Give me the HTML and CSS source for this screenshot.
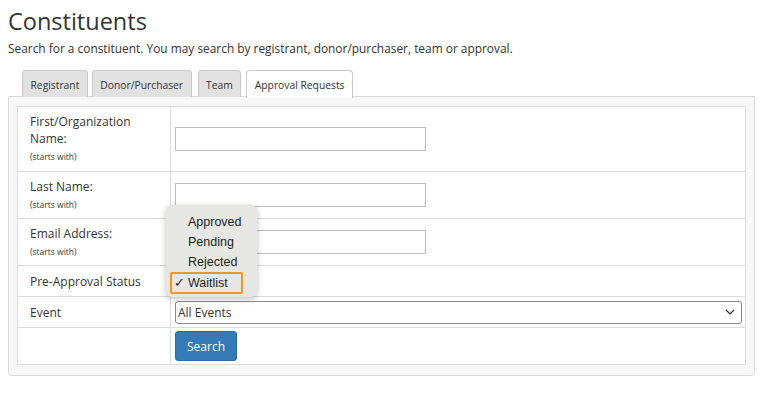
FILE: index.html
```html
<!DOCTYPE html>
<html lang="en">
<head>
  <meta charset="UTF-8">
  <meta name="viewport" content="width=device-width, initial-scale=1.0">
  <title>Constituents</title>
  <link rel="stylesheet" href="styles.css">
</head>
<body>
  <h1>Constituents</h1>
  <p class="intro">Search for a constituent. You may search by registrant, donor/purchaser, team or approval.</p>

  <div class="tabs">
    <div class="tab">Registrant</div>
    <div class="tab">Donor/Purchaser</div>
    <div class="tab">Team</div>
    <div class="tab active">Approval Requests</div>
  </div>

  <div class="panel">
    <table class="search-table">
      <tr class="row-tall">
        <td class="label">First/Organization Name:<br><small>(starts with)</small></td>
        <td><input type="text" class="text-input"></td>
      </tr>
      <tr class="row-mid">
        <td class="label">Last Name:<br><small>(starts with)</small></td>
        <td><input type="text" class="text-input"></td>
      </tr>
      <tr class="row-mid">
        <td class="label">Email Address:<br><small>(starts with)</small></td>
        <td><input type="text" class="text-input"></td>
      </tr>
      <tr class="row-short">
        <td class="label">Pre-Approval Status</td>
        <td class="status-cell">
          <div class="menu">
            <div class="menu-item">Approved</div>
            <div class="menu-item">Pending</div>
            <div class="menu-item">Rejected</div>
            <div class="menu-item checked"><span class="check">✓</span>Waitlist</div>
          </div>
        </td>
      </tr>
      <tr class="row-short">
        <td class="label">Event</td>
        <td>
          <div class="select">
            <span>All Events</span>
            <svg width="10" height="6" viewBox="0 0 10 6"><path d="M1 1l4 4 4-4" fill="none" stroke="#333" stroke-width="1.2"/></svg>
          </div>
        </td>
      </tr>
      <tr class="row-button">
        <td></td>
        <td><button class="search-btn">Search</button></td>
      </tr>
    </table>
  </div>
</body>
</html>
```
FILE: styles.css
```css
body {
  margin: 8px;
  font-family: "Open Sans", sans-serif;
  color: #333;
  background: #fff;
}
h1 {
  margin: 0 0 5px 0;
  font-size: 23.5px;
  font-weight: 400;
  line-height: 27px;
}
.intro {
  margin: 0;
  font-size: 11.9px;
  line-height: 16px;
}
.tabs {
  display: flex;
  margin-top: 14px;
  padding-left: 14px;
  position: relative;
  z-index: 1;
}
.tab {
  font-size: 10.3px;
  line-height: 23px;
  padding: 3px 7.5px 0 7.5px;
  margin-right: 5px;
  background: #e1e1e1;
  border: 1px solid #c8c8c8;
  border-bottom: none;
  border-radius: 4px 4px 0 0;
  height: 23px;
}
.tab:first-child {
  margin-right: 4px;
}
.tab:nth-child(2) {
  margin-right: 6px;
}
.tab.active {
  background: #fff;
  height: 24px;
  margin-bottom: -1px;
}
.panel {
  background: #f7f7f7;
  border: 1px solid #d9d9d9;
  border-radius: 0 0 4px 4px;
  padding: 9px 8px 10px 8px;
  margin-top: -1px;
}
.search-table {
  width: 100%;
  border-collapse: collapse;
  background: #fff;
}
.search-table td {
  border: 1px solid #dcdcdc;
  padding: 0 3px 0 4px;
  font-size: 12px;
  vertical-align: middle;
}
.search-table td.label {
  width: 128px;
  padding: 0 12px;
  line-height: 17px;
}
.label small {
  font-size: 8.5px;
}
.row-tall { height: 65px; }
.row-mid { height: 47px; }
.row-short { height: 31px; }
.row-button { height: 37px; }
.text-input {
  display: block;
  width: 251px;
  height: 24px;
  box-sizing: border-box;
  border: 1px solid #bdbdbd;
  margin: 0;
}
.select {
  display: flex;
  align-items: center;
  justify-content: space-between;
  height: 21px;
  border: 1px solid #8a8a8a;
  border-radius: 3px;
  padding: 0 6px 0 2px;
  font-size: 12px;
}
.search-btn {
  display: block;
  background: #337ab7;
  color: #fff;
  border: 1px solid #2e6da4;
  border-radius: 3px;
  font-family: "Open Sans", sans-serif;
  font-size: 12px;
  width: 62px;
  height: 30px;
  padding: 0;
}
.status-cell {
  position: relative;
}
.menu {
  position: absolute;
  left: -5px;
  bottom: -1px;
  width: 91px;
  padding: 7px 0 3px 0;
  background: #e6e7e2;
  border-radius: 6px;
  box-shadow: 0 2px 6px rgba(0, 0, 0, 0.25);
  font-family: "Liberation Sans", sans-serif;
  font-size: 12.5px;
  color: #1e1e1e;
}
.menu-item {
  line-height: 20px;
  padding-left: 22px;
}
.menu-item.checked {
  position: relative;
  margin: 0 14px 0 4px;
  padding-left: 16px;
  border: 2px solid #f7941d;
  border-radius: 2px;
  line-height: 18px;
}
.check {
  position: absolute;
  left: 2px;
}
```
